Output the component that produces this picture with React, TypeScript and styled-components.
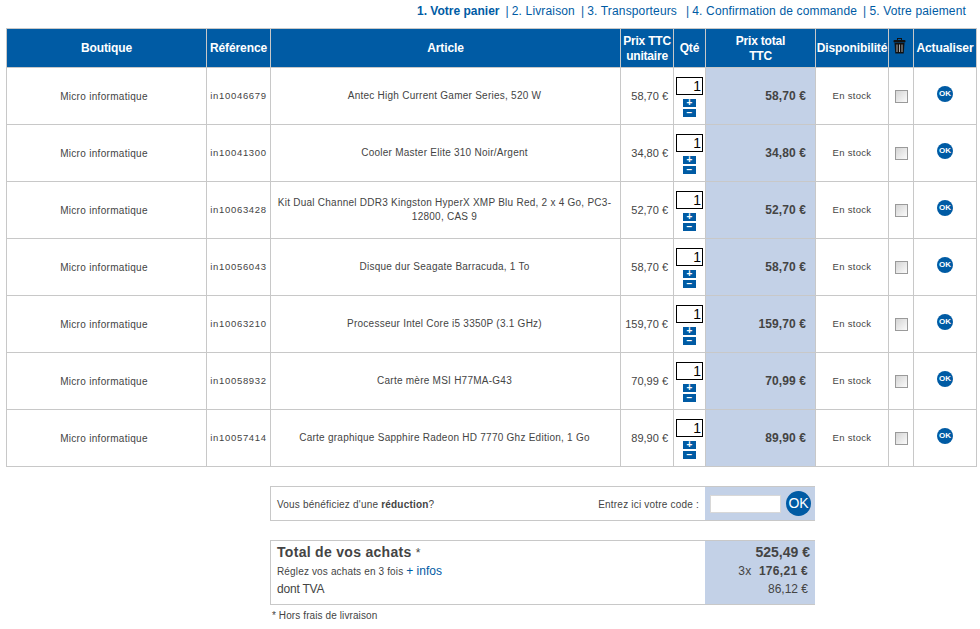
import React from "react";
import styled, { createGlobalStyle } from "styled-components";

type CartLine = {
  ref: string;
  name: string;
  price: string;
};

const lines: CartLine[] = [
  { ref: "in10046679", name: "Antec High Current Gamer Series, 520 W", price: "58,70 €" },
  { ref: "in10041300", name: "Cooler Master Elite 310 Noir/Argent", price: "34,80 €" },
  { ref: "in10063428", name: "Kit Dual Channel DDR3 Kingston HyperX XMP Blu Red, 2 x 4 Go, PC3-12800, CAS 9", price: "52,70 €" },
  { ref: "in10056043", name: "Disque dur Seagate Barracuda, 1 To", price: "58,70 €" },
  { ref: "in10063210", name: "Processeur Intel Core i5 3350P (3.1 GHz)", price: "159,70 €" },
  { ref: "in10058932", name: "Carte mère MSI H77MA-G43", price: "70,99 €" },
  { ref: "in10057414", name: "Carte graphique Sapphire Radeon HD 7770 Ghz Edition, 1 Go", price: "89,90 €" },
];

const steps = ["2. Livraison", "3. Transporteurs", "4. Confirmation de commande", "5. Votre paiement"];

const TrashIcon = () => (
  <svg width="13" height="16" viewBox="0 0 13 16">
    <rect x="4.5" y="0.5" width="4" height="2" fill="none" stroke="#111" />
    <rect x="0.5" y="2" width="12" height="2.5" rx="1" fill="#111" />
    <path d="M1.5 5h10l-.8 10.5H2.3z" fill="#111" />
    <path d="M4 6.5v7.5M6.5 6.5v7.5M9 6.5v7.5" stroke="#aaa" strokeWidth="1" />
  </svg>
);

const App = () => {
  return (
    <Page>
      <GlobalStyle />
      <Steps>
        <CurrentStep>1. Votre panier</CurrentStep>
        {steps.map((step) => (
          <Step key={step}>{step}</Step>
        ))}
      </Steps>
      <CartTable>
        <colgroup>
          <col width="200" />
          <col width="64" />
          <col width="350" />
          <col width="53" />
          <col width="32" />
          <col width="110" />
          <col width="73" />
          <col width="25" />
          <col width="63" />
        </colgroup>
        <thead>
          <tr>
            <Th>Boutique</Th>
            <Th>Référence</Th>
            <Th>Article</Th>
            <TwoLineTh>
              Prix TTC
              <br />
              unitaire
            </TwoLineTh>
            <Th>Qté</Th>
            <TwoLineTh>
              Prix total
              <br />
              TTC
            </TwoLineTh>
            <Th>Disponibilité</Th>
            <IconTh>
              <TrashIcon />
            </IconTh>
            <Th>Actualiser</Th>
          </tr>
        </thead>
        <tbody>
          {lines.map((line) => (
            <tr key={line.ref}>
              <ShopCell>Micro informatique</ShopCell>
              <RefCell>{line.ref}</RefCell>
              <ArticleCell>{line.name}</ArticleCell>
              <PriceCell>{line.price}</PriceCell>
              <QtyCell>
                <QtyBox>1</QtyBox>
                <QtyButton>+</QtyButton>
                <QtyButton>−</QtyButton>
              </QtyCell>
              <TotalCell>{line.price}</TotalCell>
              <StockCell>En stock</StockCell>
              <CheckCell>
                <Check />
              </CheckCell>
              <UpdateCell>
                <OkBullet>OK</OkBullet>
              </UpdateCell>
            </tr>
          ))}
        </tbody>
      </CartTable>

      <Summary>
        <SummaryBox>
          <DiscountMain>
            <span>
              Vous bénéficiez d'une <b>réduction</b>?
            </span>
            <span>Entrez ici votre code :</span>
          </DiscountMain>
          <DiscountSide>
            <CodeInput />
            <OkRound>OK</OkRound>
          </DiscountSide>
        </SummaryBox>

        <TotalBox>
          <TotalMain>
            <TotalTitle>
              Total de vos achats <Star>*</Star>
            </TotalTitle>
            <TotalRow>
              Réglez vos achats en 3 fois <InfoLink>+ infos</InfoLink>
            </TotalRow>
            <VatLabel>dont TVA</VatLabel>
          </TotalMain>
          <TotalSide>
            <GrandTotal>525,49 €</GrandTotal>
            <Instalment>
              3x&nbsp; <b>176,21 €</b>
            </Instalment>
            <VatValue>86,12 €</VatValue>
          </TotalSide>
        </TotalBox>
        <Footnote>* Hors frais de livraison</Footnote>
      </Summary>
    </Page>
  );
};

export default App;

const GlobalStyle = createGlobalStyle`
  html, body {
    margin: 0;
    background: #fff;
    overflow: hidden;
  }
  body {
    font-family: "Liberation Sans", Arial, sans-serif;
    color: #444;
  }
`;

const Page = styled.div`
  width: 980px;
  height: 629px;
  padding-left: 6px;
  box-sizing: border-box;
`;

const Steps = styled.div`
  display: flex;
  justify-content: flex-end;
  align-items: center;
  gap: 6px;
  height: 22px;
  margin-bottom: 6px;
  padding-right: 14px;
  font-size: 12px;
  letter-spacing: 0.15px;
  color: #005ba4;
`;

const CurrentStep = styled.b`
  letter-spacing: 0;
`;

const Step = styled.span`
  &:before {
    content: "|";
    margin-right: 3px;
  }
  &:nth-child(3) {
    margin-right: 3px;
  }
`;

const CartTable = styled.table`
  width: 970px;
  table-layout: fixed;
  border-collapse: collapse;
  border: 1px solid #c8c8c8;
`;

const Th = styled.th`
  box-sizing: border-box;
  height: 39px;
  padding: 0;
  background: #005ba4;
  border: 1px solid #c8c8c8;
  color: #fff;
  font-size: 12px;
  font-weight: bold;
  letter-spacing: -0.1px;
  line-height: 15px;
  text-align: center;
  vertical-align: middle;
`;

const TwoLineTh = styled(Th)`
  padding-top: 1px;
  letter-spacing: -0.2px;
`;

const IconTh = styled(Th)`
  padding-bottom: 1px;
  padding-right: 3px;
`;

const Td = styled.td`
  box-sizing: border-box;
  height: 57px;
  padding: 0 2px 1px;
  border: 1px solid #c8c8c8;
  font-size: 10px;
  line-height: 14px;
  letter-spacing: 0.25px;
  text-align: center;
  vertical-align: middle;
`;

const ShopCell = styled(Td)`
  padding: 1px 5px 0 0;
  letter-spacing: 0.3px;
`;

const RefCell = styled(Td)`
  font-size: 9.5px;
  letter-spacing: 0.7px;
  padding: 0;
`;

const ArticleCell = styled(Td)`
  padding-right: 4px;
`;

const PriceCell = styled(Td)`
  font-size: 11px;
  letter-spacing: 0;
  text-align: right;
  padding-right: 5px;
`;

const QtyCell = styled(Td)`
  padding: 0;
  vertical-align: top;
`;

const QtyBox = styled.div`
  width: 24px;
  height: 16px;
  margin: 9px 0 4px 2px;
  border: 1px solid #000;
  background: #fff;
  color: #000;
  font-size: 14px;
  line-height: 17px;
  letter-spacing: 0;
  text-align: right;
  padding-right: 1px;
  box-sizing: content-box;
`;

const QtyButton = styled.div`
  width: 13px;
  height: 8px;
  margin: 0 0 2px 9px;
  background: #005ba4;
  color: #fff;
  font-size: 10px;
  font-weight: bold;
  line-height: 8px;
  letter-spacing: 0;
  text-align: center;
`;

const TotalCell = styled(Td)`
  background: #c3d1e7;
  font-size: 12px;
  font-weight: bold;
  letter-spacing: 0.1px;
  text-align: right;
  padding-right: 9px;
`;

const StockCell = styled(Td)`
  font-size: 9.5px;
  letter-spacing: 0.3px;
`;

const CheckCell = styled(Td)`
  padding: 0;
`;

const UpdateCell = styled(Td)`
  padding-bottom: 4px;
`;

const Check = styled.span`
  display: inline-block;
  width: 11px;
  height: 11px;
  border: 1px solid #9a9a9a;
  background: linear-gradient(135deg, #d4d4d4, #fbfbfb);
  vertical-align: middle;
`;

const OkBullet = styled.span`
  display: inline-block;
  width: 16px;
  height: 16px;
  border-radius: 50%;
  background: #005ba4;
  color: #fff;
  font-size: 8px;
  font-weight: bold;
  letter-spacing: 0;
  line-height: 16px;
`;

const Summary = styled.div`
  width: 545px;
  margin: 19px 0 0 264px;
`;

const SummaryBox = styled.div`
  display: flex;
  height: 33px;
  border: 1px solid #c8c8c8;
  border-right: 0;
`;

const DiscountMain = styled.div`
  flex: 1;
  display: flex;
  justify-content: space-between;
  align-items: center;
  padding: 2px 6px 0;
  font-size: 10px;
  letter-spacing: 0.2px;
`;

const DiscountSide = styled.div`
  display: flex;
  align-items: center;
  width: 110px;
  padding-left: 5px;
  box-sizing: border-box;
  background: #c3d1e7;
`;

const CodeInput = styled.input`
  width: 71px;
  height: 18px;
  padding: 0;
  margin-right: 5px;
  box-sizing: border-box;
  border: 1px solid #d8d8d8;
  background: #fff;
`;

const OkRound = styled.span`
  width: 25px;
  height: 25px;
  border-radius: 50%;
  background: #005ba4;
  color: #fff;
  font-size: 14px;
  line-height: 25px;
  text-align: center;
`;

const TotalBox = styled.div`
  display: flex;
  height: 63px;
  margin-top: 19px;
  border: 1px solid #c8c8c8;
  border-right: 0;
`;

const TotalMain = styled.div`
  flex: 1;
  padding: 1px 0 0 6px;
`;

const TotalTitle = styled.div`
  height: 20px;
  font-size: 14px;
  font-weight: bold;
  letter-spacing: 0.3px;
  line-height: 20px;
`;

const Star = styled.span`
  font-size: 12px;
  font-weight: normal;
`;

const TotalRow = styled.div`
  height: 18px;
  font-size: 10px;
  letter-spacing: 0.15px;
  line-height: 18px;
`;

const InfoLink = styled.span`
  color: #005ba4;
  font-size: 12px;
  letter-spacing: 0;
`;

const VatLabel = styled.div`
  font-size: 12px;
  letter-spacing: -0.2px;
  line-height: 18px;
`;

const TotalSide = styled.div`
  width: 110px;
  padding: 1px 5px 0 0;
  box-sizing: border-box;
  background: #c3d1e7;
  text-align: right;
`;

const GrandTotal = styled.div`
  height: 20px;
  font-size: 14px;
  font-weight: bold;
  line-height: 20px;
`;

const Instalment = styled.div`
  height: 18px;
  padding-right: 2px;
  font-size: 12px;
  letter-spacing: 0.3px;
  line-height: 18px;
`;

const VatValue = styled.div`
  padding-right: 2px;
  font-size: 12px;
  line-height: 18px;
`;

const Footnote = styled.div`
  margin: 5px 0 0 2px;
  font-size: 10px;
  letter-spacing: 0.1px;
`;
